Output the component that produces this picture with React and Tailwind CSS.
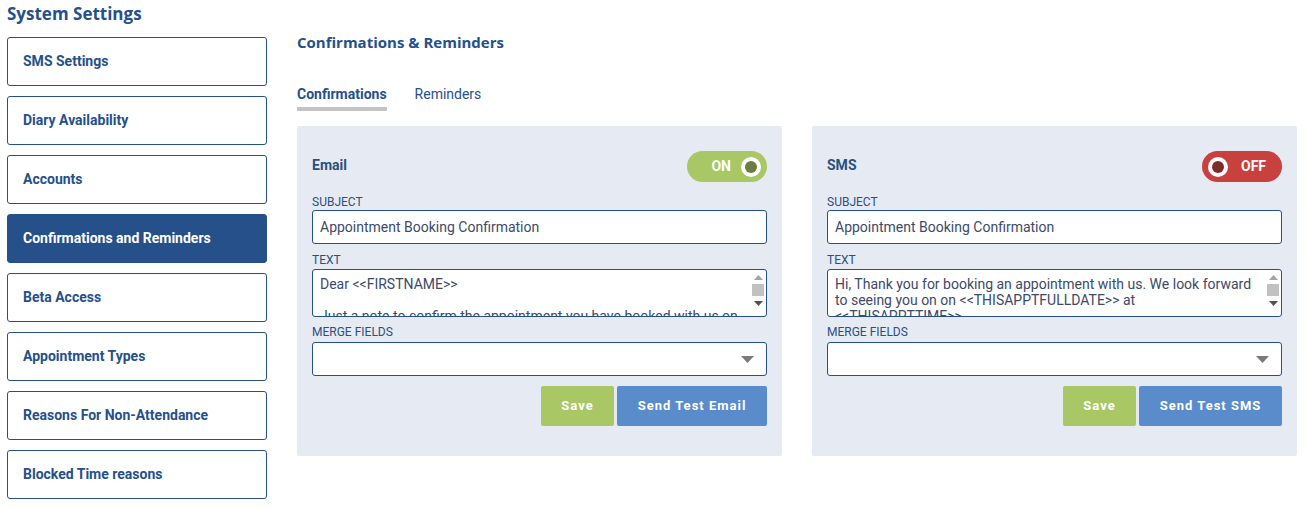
import React, { useState } from 'react';

const menuItems = [
  'SMS Settings',
  'Diary Availability',
  'Accounts',
  'Confirmations and Reminders',
  'Beta Access',
  'Appointment Types',
  'Reasons For Non-Attendance',
  'Blocked Time reasons',
];

const Toggle = ({ on }) =>
  on ? (
    <div className="w-[80px] h-[31px] rounded-full bg-[#a9c764] flex items-center justify-end pr-[6px] gap-[10px]">
      <span className="text-white font-bold text-[14px]">ON</span>
      <div className="w-[20px] h-[20px] rounded-full bg-white flex items-center justify-center">
        <div className="w-[12px] h-[12px] rounded-full bg-[#6b7d3f]" />
      </div>
    </div>
  ) : (
    <div className="w-[80px] h-[31px] rounded-full bg-[#c8413e] flex items-center pl-[6px] gap-[13px]">
      <div className="w-[20px] h-[20px] rounded-full bg-white flex items-center justify-center">
        <div className="w-[12px] h-[12px] rounded-full bg-[#7e2a2b]" />
      </div>
      <span className="text-white font-bold text-[14px]">OFF</span>
    </div>
  );

const FakeScrollbar = () => (
  <div className="w-[14px] flex flex-col items-center pt-[5px] pr-[2px]">
    <svg width="9" height="5" viewBox="0 0 9 5"><path d="M0 5 L4.5 0 L9 5Z" fill="#a3a3a3" /></svg>
    <div className="w-[12px] h-[12px] bg-[#c1c1c1] mt-[4px]" />
    <svg width="9" height="5" viewBox="0 0 9 5" className="mt-[5px]"><path d="M0 0 L4.5 5 L9 0Z" fill="#505050" /></svg>
  </div>
);

const Panel = ({ title, on, text, button, buttonWidth }) => (
  <div className="w-[485px] h-[330px] bg-[#e6ebf3] rounded-[2px] px-[15px] pt-[25px]">
    <div className="flex items-center justify-between h-[31px]">
      <span className="text-[14px] font-bold text-[#2a4f80] -mt-[2px]">{title}</span>
      <Toggle on={on} />
    </div>
    <div className="mt-[13px] text-[12px] leading-[14px] text-[#2a4f80] uppercase">Subject</div>
    <div className="mt-[1px] h-[34px] bg-white border border-[#25508a] rounded-[3px] flex items-center px-[7px] text-[14px] text-[#3d4a68]">
      Appointment Booking Confirmation
    </div>
    <div className="mt-[9px] text-[12px] leading-[14px] text-[#2a4f80] uppercase">Text</div>
    <div className="mt-[2px] h-[48px] bg-white border border-[#25508a] rounded-[3px] flex overflow-hidden">
      <div className="flex-1 pl-[7px] pt-[6px] pr-[10px] text-[14px] leading-[16px] text-[#3d4a68] whitespace-pre-wrap">
        {text}
      </div>
      <FakeScrollbar />
    </div>
    <div className="mt-[8px] text-[12px] leading-[14px] text-[#2a4f80] uppercase">Merge Fields</div>
    <div className="mt-[3px] h-[34px] bg-white border border-[#25508a] rounded-[3px] flex items-center justify-end pr-[12px]">
      <svg width="13" height="7" viewBox="0 0 13 7"><path d="M0 0 L13 0 L6.5 7Z" fill="#7a7a7a" /></svg>
    </div>
    <div className="mt-[10px] flex justify-end gap-[3px]">
      <button className="w-[73px] h-[40px] bg-[#a9c764] rounded-[2px] text-white font-bold text-[13px] tracking-[1px]">Save</button>
      <button className={`${buttonWidth} h-[40px] bg-[#5a8bcb] rounded-[2px] text-white font-bold text-[13px] tracking-[1px]`}>{button}</button>
    </div>
  </div>
);

const App = () => {
  const [active] = useState('Confirmations and Reminders');

  return (
    <div className="w-[1308px] h-[508px] bg-white flex font-['Roboto',sans-serif]">
      {/* Sidebar */}
      <div className="w-[260px] ml-[7px] shrink-0">
        <h1 className="font-['Open_Sans',sans-serif] font-bold text-[17px] leading-[22px] pt-[3px] text-[#25508a]">
          System Settings
        </h1>
        <div className="mt-[12px] flex flex-col gap-[10px]">
          {menuItems.map((item) => (
            <div
              key={item}
              className={`h-[49px] rounded-[3px] border border-[#25508a] flex items-center px-[15px] text-[14px] font-bold ${
                item === active ? 'bg-[#25508a] text-white' : 'bg-white text-[#25508a]'
              }`}
            >
              {item}
            </div>
          ))}
        </div>
      </div>

      {/* Main */}
      <div className="ml-[30px] flex-1">
        <h2 className="font-['Open_Sans',sans-serif] font-bold text-[15px] leading-[20px] pt-[32px] text-[#25508a]">
          Confirmations &amp; Reminders
        </h2>
        <div className="mt-[32px] flex gap-[28px] text-[14px] text-[#25508a]">
          <div className="flex flex-col">
            <span className="font-bold leading-[20px]">Confirmations</span>
            <div className="mt-[3px] h-[4px] bg-[#c4c4c4]" />
          </div>
          <span className="leading-[20px]">Reminders</span>
        </div>
        <div className="mt-[15px] flex gap-[30px]">
          <Panel
            title="Email"
            on
            text={'Dear <<FIRSTNAME>>\n\nJust a note to confirm the appointment you have booked with us on'}
            button="Send Test Email"
            buttonWidth="w-[150px]"
          />
          <Panel
            title="SMS"
            on={false}
            text={'Hi, Thank you for booking an appointment with us. We look forward to seeing you on on <<THISAPPTFULLDATE>> at <<THISAPPTTIME>>'}
            button="Send Test SMS"
            buttonWidth="w-[143px]"
          />
        </div>
      </div>
    </div>
  );
};

export default App;
